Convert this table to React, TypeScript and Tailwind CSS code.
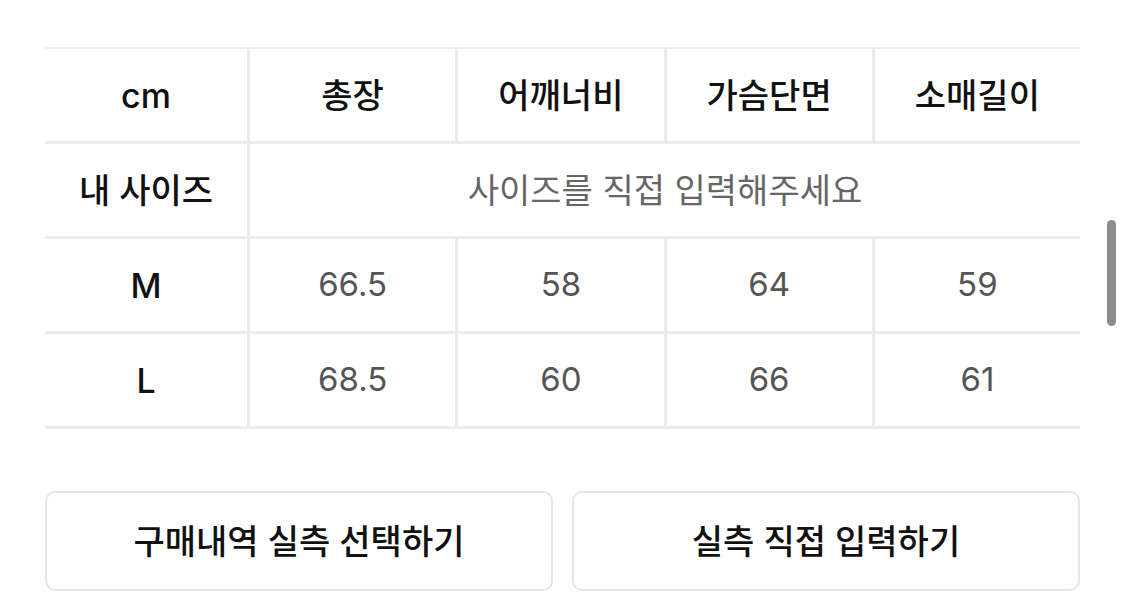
const rows = [
  { size: "M", values: ["66.5", "58", "64", "59"] },
  { size: "L", values: ["68.5", "60", "66", "61"] },
];

const heads = ["총장", "어깨너비", "가슴단면", "소매길이"];

const font = "font-['Inter','Noto_Sans_CJK_KR',sans-serif]";
const line = "border-[#ebebeb]";

export default function App() {
  return (
    <div className={`relative h-[609px] w-[1125px] overflow-hidden bg-white ${font}`}>
      <div className="ml-[45px] w-[1035px] pt-[47px]">
        <div className={`border-t-[2px] ${line}`}>
          <div className={`grid h-[95px] grid-cols-[202px_1fr_1fr_1fr_1fr] border-b-[3px] ${line} text-[34px] font-medium text-[#111]`}>
            <div className="flex items-center justify-center">cm</div>
            {heads.map((h) => (
              <div key={h} className={`flex items-center justify-center border-l-[3px] ${line}`}>
                {h}
              </div>
            ))}
          </div>

          <div className={`grid h-[95px] grid-cols-[202px_1fr] border-b-[3px] ${line}`}>
            <div className="flex items-center justify-center text-[34px] font-medium text-[#111]">내 사이즈</div>
            <div className={`flex items-center justify-center border-l-[3px] ${line} text-[34px] text-[#666]`}>
              사이즈를 직접 입력해주세요
            </div>
          </div>

          {rows.map((r) => (
            <div key={r.size} className={`grid h-[95px] grid-cols-[202px_1fr_1fr_1fr_1fr] border-b-[3px] ${line}`}>
              <div className="flex items-center justify-center text-[34px] font-medium text-[#111]">{r.size}</div>
              {r.values.map((v, i) => (
                <div
                  key={i}
                  className={`flex items-center justify-center border-l-[3px] ${line} text-[33px] text-[#555]`}
                >
                  {v}
                </div>
              ))}
            </div>
          ))}
        </div>

        <div className="mt-[62px] flex gap-[19px]">
          <button className="flex h-[100px] flex-1 items-center justify-center rounded-[10px] border-2 border-[#e6e6e6] bg-white text-[34px] font-medium text-[#111]">
            구매내역 실측 선택하기
          </button>
          <button className="flex h-[100px] flex-1 items-center justify-center rounded-[10px] border-2 border-[#e6e6e6] bg-white text-[34px] font-medium text-[#111]">
            실측 직접 입력하기
          </button>
        </div>
      </div>

      {/* scroll indicator */}
      <div className="absolute left-[1107px] top-[220px] h-[106px] w-[9px] rounded-full bg-[#8c8c8c]" />
    </div>
  );
}
